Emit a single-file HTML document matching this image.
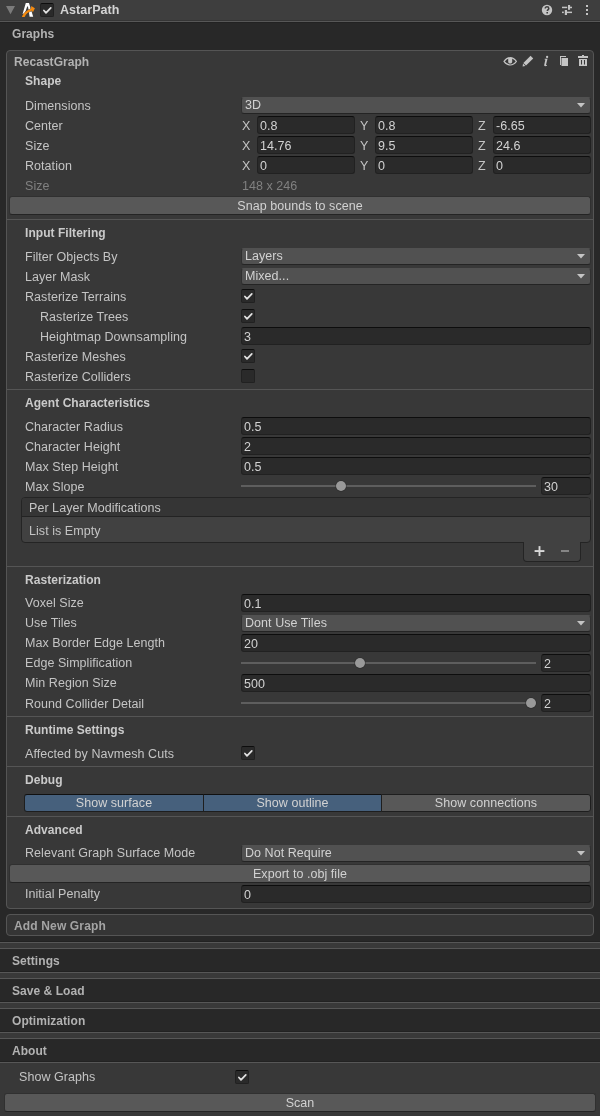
<!DOCTYPE html>
<html><head><meta charset="utf-8"><style>
html,body{margin:0;padding:0;}
body{width:600px;height:1116px;overflow:hidden;position:relative;background:#383838;font-family:"Liberation Sans",sans-serif;}
div,svg{position:absolute;box-sizing:border-box;}
.abs{position:absolute;}
.t{will-change:transform;font-size:12.5px;line-height:18px;white-space:nowrap;color:#c4c4c4;letter-spacing:0.05px;}
.t.b{font-weight:bold;letter-spacing:0.05px;font-size:12px;}
.hdr{background:#3e3e3e;}
.hdrt{color:#d4d4d4;}
.dark{background:#282828;}
.sec{color:#b2b2b2;}
.gtitle{color:#b2b2b2;}
.h2{color:#cacaca;}
.addt{color:#a4a4a4;letter-spacing:0.15px !important;}
.lbl{color:#c4c4c4;}
.val{color:#d2d2d2;}
.dis{color:#808080;}
.box{background:#383838;border:1px solid #555;border-radius:4px;}
.box2{background:#353535;border:1px solid #555;border-radius:4px;}
.sep{background:#555;}
.fld{background:#2a2a2a;border:1px solid #212121;border-top-color:#0d0d0d;border-radius:3px;}
.pop{background:#515151;border:1px solid #303030;border-top-color:#515151;border-bottom-color:#242424;border-radius:3px;}
.btn{background:#585858;border:1px solid #303030;border-top-color:#303030;border-bottom-color:#242424;border-radius:3px;}
.chk{background:#2a2a2a;border:1px solid #212121;border-top-color:#0d0d0d;border-radius:2px;}
.trk{background:#5e5e5e;}
.thumb{width:10.5px;height:10.5px;border-radius:50%;background:#999;box-shadow:0 0 0 0.6px rgba(30,30,30,0.6);}
.tb{background:#585858;border:1px solid #1e1e1e;}
.tb.sel{background:#46607c;border-color:#101010 #1e1e1e #1e1e1e #1e1e1e;}
.plbox{background:#414141;border:1px solid #242424;border-radius:4px;}
.plfoot{background:#414141;border:1px solid #242424;border-top:none;border-radius:0 0 4px 4px;}
</style></head><body>
<div class="hdr" style="left:0px;top:0px;width:600px;height:20px;"></div>
<div class="abs" style="left:0px;top:20px;width:600px;height:1px;background:#353535"></div>
<div class="abs" style="left:0px;top:21px;width:600px;height:1px;background:#575757"></div>
<div class="abs" style="left:0px;top:22px;width:600px;height:1px;background:#222"></div>
<svg class="abs" style="left:6px;top:6px" width="9" height="9" viewBox="0 0 9 9"><path d="M0 0H9L4.5 8.3Z" fill="#7b7b7b"/></svg>
<svg class="abs" style="left:20px;top:1px" width="18" height="18" viewBox="20 1 18 18"><path d="M25.8 3.1L29 3.1L33.2 16.8L29.6 16.8L28 6.6L27.2 6.6L24.6 14L22.6 14Z" fill="#fff"/><path d="M21.8 16.9C23 13.5 26 10.5 31 8.8L31.3 6L34.9 8.2L32.8 12.5L32 10.6C28.5 12 26 14 24.6 16.9Z" fill="#f48a0f" stroke="#3e3e3e" stroke-width="0.7" paint-order="stroke"/></svg>
<div class="chk" style="left:40px;top:3px;width:14px;height:14px;"></div>
<svg class="abs" style="left:40px;top:3px" width="14" height="14" viewBox="0 0 14 14"><path d="M3.9 7.5L6 9.9L10.8 4.8" fill="none" stroke="#e2e2e2" stroke-width="1.7" stroke-linecap="round" stroke-linejoin="round"/></svg>
<div class="t b hdrt" style="left:60px;top:0.74px;font-size:12.5px">AstarPath</div>
<svg class="abs" style="left:541px;top:4px" width="12" height="12" viewBox="0 0 12 12"><circle cx="6" cy="6" r="5.2" fill="#c4c4c4"/><path d="M4.2 4.6C4.2 3.4 5 2.8 6 2.8C7 2.8 7.8 3.4 7.8 4.4C7.8 5.6 6.3 5.7 6.3 7.1" fill="none" stroke="#3e3e3e" stroke-width="1.5"/><rect x="5.4" y="8" width="1.6" height="1.5" fill="#3e3e3e"/></svg>
<svg class="abs" style="left:561px;top:4px" width="12" height="12" viewBox="561 4 12 12" fill="#c4c4c4"><rect x="562" y="6.7" width="5.2" height="1.5"/><rect x="568.2" y="6.7" width="3.8" height="1.5"/><rect x="568" y="5" width="2.1" height="4.8"/><rect x="562" y="11.6" width="1.8" height="1.5"/><rect x="565.5" y="11.6" width="6.5" height="1.5"/><rect x="564.8" y="10" width="2.2" height="5"/></svg>
<svg class="abs" style="left:584px;top:4px" width="6" height="12" viewBox="0 0 6 12" fill="#c4c4c4"><rect x="2" y="1" width="2" height="2"/><rect x="2" y="5" width="2" height="2"/><rect x="2" y="9" width="2" height="2"/></svg>
<div class="dark" style="left:0px;top:23px;width:600px;height:919px;"></div>
<div class="t b sec" style="left:12px;top:25.04px;">Graphs</div>
<div class="box" style="left:6px;top:50px;width:588px;height:859px"></div>
<div class="t b gtitle" style="left:14px;top:53.24px;">RecastGraph</div>
<svg class="abs" style="left:503px;top:56px" width="15" height="11" viewBox="503 56 15 11"><path d="M504 61.4C506 58.6 508 57.6 510.2 57.6C512.4 57.6 514.4 58.6 516.4 61.4C514.4 64.2 512.4 65 510.2 65C508 65 506 64.2 504 61.4Z" fill="none" stroke="#c4c4c4" stroke-width="1.1"/><path d="M508.2 58H512.2V61.8C512.2 63 511.3 63.6 510.2 63.6C509.1 63.6 508.2 63 508.2 61.8Z" fill="#c4c4c4"/></svg>
<svg class="abs" style="left:522px;top:55px" width="12" height="12" viewBox="0 0 12 12" fill="#c4c4c4"><path d="M8.6 0.8L11.2 3.4L4 10.6L1.4 8Z"/><path d="M1 8.6L3.4 11L0.6 11.4Z"/></svg>
<svg class="abs" style="left:542px;top:55px" width="8" height="12" viewBox="542 55 8 12" fill="#c4c4c4"><circle cx="547.1" cy="57" r="1.15"/><path d="M544.7 58.8H547.5L546.1 64.5C546 65 546.3 65.2 546.9 64.9L547.1 65.6C546.1 66.3 544.6 66.5 544.3 65.8C544.1 65.4 544.2 65 544.3 64.5L545.4 59.6H544.5Z"/></svg>
<svg class="abs" style="left:559px;top:55px" width="11" height="12" viewBox="0 0 11 12" fill="#c4c4c4"><path d="M1 1H7V2H2V10H1Z"/><rect x="2.5" y="3" width="6.5" height="8"/></svg>
<svg class="abs" style="left:577px;top:54px" width="12" height="13" viewBox="0 0 12 13" fill="#c4c4c4"><rect x="5" y="1" width="2" height="1.5"/><rect x="1" y="2" width="10" height="2"/><path d="M2 5H10V12H2Z M4 6V10.5H5V6Z M7 6V10.5H8V6Z" fill-rule="evenodd"/></svg>
<div class="t b h2" style="left:25px;top:72.34px;">Shape</div>
<div class="t lbl" style="left:25px;top:96.97px;">Dimensions</div>
<div class="pop" style="left:241px;top:97px;width:350px;height:17px;"></div>
<div class="t val" style="left:244.5px;top:96.17px;">3D</div>
<svg class="arr" style="left:577px;top:103px" width="8" height="5" viewBox="0 0 8 5"><path d="M0 0H8L4 4.5Z" fill="#c4c4c4"/></svg>
<div class="t lbl" style="left:25px;top:117.17px;">Center</div>
<div class="t lbl" style="left:242px;top:117.17px;">X</div>
<div class="fld" style="left:257px;top:116px;width:98px;height:18px;"></div>
<div class="t val" style="left:260px;top:117.17px;">0.8</div>
<div class="t lbl" style="left:360px;top:117.17px;">Y</div>
<div class="fld" style="left:374.5px;top:116px;width:98.0px;height:18px;"></div>
<div class="t val" style="left:377.5px;top:117.17px;">0.8</div>
<div class="t lbl" style="left:478px;top:117.17px;">Z</div>
<div class="fld" style="left:493px;top:116px;width:98px;height:18px;"></div>
<div class="t val" style="left:496px;top:117.17px;">-6.65</div>
<div class="t lbl" style="left:25px;top:137.17px;">Size</div>
<div class="t lbl" style="left:242px;top:137.17px;">X</div>
<div class="fld" style="left:257px;top:136px;width:98px;height:18px;"></div>
<div class="t val" style="left:260px;top:137.17px;">14.76</div>
<div class="t lbl" style="left:360px;top:137.17px;">Y</div>
<div class="fld" style="left:374.5px;top:136px;width:98.0px;height:18px;"></div>
<div class="t val" style="left:377.5px;top:137.17px;">9.5</div>
<div class="t lbl" style="left:478px;top:137.17px;">Z</div>
<div class="fld" style="left:493px;top:136px;width:98px;height:18px;"></div>
<div class="t val" style="left:496px;top:137.17px;">24.6</div>
<div class="t lbl" style="left:25px;top:157.17px;">Rotation</div>
<div class="t lbl" style="left:242px;top:157.17px;">X</div>
<div class="fld" style="left:257px;top:156px;width:98px;height:18px;"></div>
<div class="t val" style="left:260px;top:157.17px;">0</div>
<div class="t lbl" style="left:360px;top:157.17px;">Y</div>
<div class="fld" style="left:374.5px;top:156px;width:98.0px;height:18px;"></div>
<div class="t val" style="left:377.5px;top:157.17px;">0</div>
<div class="t lbl" style="left:478px;top:157.17px;">Z</div>
<div class="fld" style="left:493px;top:156px;width:98px;height:18px;"></div>
<div class="t val" style="left:496px;top:157.17px;">0</div>
<div class="t dis" style="left:25px;top:177.17px;">Size</div>
<div class="t dis" style="left:242px;top:177.17px;">148 x 246</div>
<div class="btn" style="left:9px;top:196px;width:582px;height:19px;"></div>
<div class="t val" style="left:9px;width:582px;text-align:center;top:196.67px;">Snap bounds to scene</div>
<div class="sep" style="left:7px;top:219px;width:586px;height:1px;"></div>
<div class="t b h2" style="left:25px;top:223.94px;">Input Filtering</div>
<div class="t lbl" style="left:25px;top:247.57px;">Filter Objects By</div>
<div class="pop" style="left:241px;top:248px;width:350px;height:17px;"></div>
<div class="t val" style="left:244.5px;top:247.17px;">Layers</div>
<svg class="arr" style="left:577px;top:254px" width="8" height="5" viewBox="0 0 8 5"><path d="M0 0H8L4 4.5Z" fill="#c4c4c4"/></svg>
<div class="t lbl" style="left:25px;top:267.57px;">Layer Mask</div>
<div class="pop" style="left:241px;top:268px;width:350px;height:17px;"></div>
<div class="t val" style="left:244.5px;top:267.17px;">Mixed...</div>
<svg class="arr" style="left:577px;top:274px" width="8" height="5" viewBox="0 0 8 5"><path d="M0 0H8L4 4.5Z" fill="#c4c4c4"/></svg>
<div class="t lbl" style="left:25px;top:287.57px;">Rasterize Terrains</div>
<div class="chk" style="left:241px;top:289px;width:14px;height:14px;"></div>
<svg class="abs" style="left:241px;top:289px" width="14" height="14" viewBox="0 0 14 14"><path d="M3.9 7.5L6 9.9L10.8 4.8" fill="none" stroke="#e2e2e2" stroke-width="1.7" stroke-linecap="round" stroke-linejoin="round"/></svg>
<div class="t lbl" style="left:40px;top:307.57px;">Rasterize Trees</div>
<div class="chk" style="left:241px;top:309px;width:14px;height:14px;"></div>
<svg class="abs" style="left:241px;top:309px" width="14" height="14" viewBox="0 0 14 14"><path d="M3.9 7.5L6 9.9L10.8 4.8" fill="none" stroke="#e2e2e2" stroke-width="1.7" stroke-linecap="round" stroke-linejoin="round"/></svg>
<div class="t lbl" style="left:40px;top:327.57px;">Heightmap Downsampling</div>
<div class="fld" style="left:241px;top:327px;width:350px;height:18px;"></div>
<div class="t val" style="left:244px;top:328.17px;">3</div>
<div class="t lbl" style="left:25px;top:347.57px;">Rasterize Meshes</div>
<div class="chk" style="left:241px;top:349px;width:14px;height:14px;"></div>
<svg class="abs" style="left:241px;top:349px" width="14" height="14" viewBox="0 0 14 14"><path d="M3.9 7.5L6 9.9L10.8 4.8" fill="none" stroke="#e2e2e2" stroke-width="1.7" stroke-linecap="round" stroke-linejoin="round"/></svg>
<div class="t lbl" style="left:25px;top:367.57px;">Rasterize Colliders</div>
<div class="chk" style="left:241px;top:369px;width:14px;height:14px;"></div>
<div class="sep" style="left:7px;top:389px;width:586px;height:1px;"></div>
<div class="t b h2" style="left:25px;top:393.84px;">Agent Characteristics</div>
<div class="t lbl" style="left:25px;top:417.67px;">Character Radius</div>
<div class="fld" style="left:241px;top:417px;width:350px;height:18px;"></div>
<div class="t val" style="left:244px;top:418.17px;">0.5</div>
<div class="t lbl" style="left:25px;top:437.67px;">Character Height</div>
<div class="fld" style="left:241px;top:437px;width:350px;height:18px;"></div>
<div class="t val" style="left:244px;top:438.17px;">2</div>
<div class="t lbl" style="left:25px;top:457.67px;">Max Step Height</div>
<div class="fld" style="left:241px;top:457px;width:350px;height:18px;"></div>
<div class="t val" style="left:244px;top:458.17px;">0.5</div>
<div class="t lbl" style="left:25px;top:477.67px;">Max Slope</div>
<div class="trk" style="left:241px;top:485px;width:295px;height:2px;"></div>
<div class="thumb" style="left:335.75px;top:480.75px"></div>
<div class="fld" style="left:541px;top:477px;width:50px;height:18px;"></div>
<div class="t val" style="left:544px;top:478.17px;">30</div>
<div class="plfoot" style="left:523px;top:541px;width:58px;height:21px"></div>
<div class="plbox" style="left:21px;top:497px;width:570px;height:46px"><div style="left:0;top:0;width:568px;height:19px;background:#353535;border-bottom:1px solid #232323;border-radius:3px 3px 0 0"></div></div>
<div style="left:524px;top:541px;width:56px;height:2px;background:#414141"></div>
<div class="t lbl" style="left:29.2px;top:498.67px;">Per Layer Modifications</div>
<div class="t lbl" style="left:29.2px;top:521.77px;">List is Empty</div>
<svg class="abs" style="left:534px;top:546px" width="11" height="11" viewBox="0 0 11 11" fill="#d8d8d8"><rect x="0.6" y="4.1" width="9.8" height="1.9"/><rect x="4.55" y="0.1" width="1.9" height="9.9"/></svg>
<div class="abs" style="left:560.5px;top:550.2px;width:8px;height:1.7px;background:#858585"></div>
<div class="sep" style="left:7px;top:566px;width:586px;height:1px;"></div>
<div class="t b h2" style="left:25px;top:570.64px;">Rasterization</div>
<div class="t lbl" style="left:25px;top:594.17px;">Voxel Size</div>
<div class="fld" style="left:241px;top:594px;width:350px;height:18px;"></div>
<div class="t val" style="left:244px;top:595.17px;">0.1</div>
<div class="t lbl" style="left:25px;top:614.17px;">Use Tiles</div>
<div class="pop" style="left:241px;top:615px;width:350px;height:17px;"></div>
<div class="t val" style="left:244.5px;top:614.17px;">Dont Use Tiles</div>
<svg class="arr" style="left:577px;top:621px" width="8" height="5" viewBox="0 0 8 5"><path d="M0 0H8L4 4.5Z" fill="#c4c4c4"/></svg>
<div class="t lbl" style="left:25px;top:634.17px;">Max Border Edge Length</div>
<div class="fld" style="left:241px;top:634px;width:350px;height:18px;"></div>
<div class="t val" style="left:244px;top:635.17px;">20</div>
<div class="t lbl" style="left:25px;top:654.17px;">Edge Simplification</div>
<div class="trk" style="left:241px;top:662px;width:295px;height:2px;"></div>
<div class="thumb" style="left:354.75px;top:657.75px"></div>
<div class="fld" style="left:541px;top:654px;width:50px;height:18px;"></div>
<div class="t val" style="left:544px;top:655.17px;">2</div>
<div class="t lbl" style="left:25px;top:674.17px;">Min Region Size</div>
<div class="fld" style="left:241px;top:674px;width:350px;height:18px;"></div>
<div class="t val" style="left:244px;top:675.17px;">500</div>
<div class="t lbl" style="left:25px;top:694.67px;">Round Collider Detail</div>
<div class="trk" style="left:241px;top:702px;width:295px;height:2px;"></div>
<div class="thumb" style="left:525.75px;top:697.75px"></div>
<div class="fld" style="left:541px;top:694px;width:50px;height:18px;"></div>
<div class="t val" style="left:544px;top:695.17px;">2</div>
<div class="sep" style="left:7px;top:716px;width:586px;height:1px;"></div>
<div class="t b h2" style="left:25px;top:720.64px;">Runtime Settings</div>
<div class="t lbl" style="left:25px;top:744.67px;">Affected by Navmesh Cuts</div>
<div class="chk" style="left:241px;top:746px;width:14px;height:14px;"></div>
<svg class="abs" style="left:241px;top:746px" width="14" height="14" viewBox="0 0 14 14"><path d="M3.9 7.5L6 9.9L10.8 4.8" fill="none" stroke="#e2e2e2" stroke-width="1.7" stroke-linecap="round" stroke-linejoin="round"/></svg>
<div class="sep" style="left:7px;top:766px;width:586px;height:1px;"></div>
<div class="t b h2" style="left:25px;top:770.64px;">Debug</div>
<div class="tb sel" style="left:24px;top:794px;width:180px;height:18px;border-radius:3px 0 0 3px"></div>
<div class="tb sel" style="left:203px;top:794px;width:179px;height:18px;border-radius:0"></div>
<div class="tb" style="left:381px;top:794px;width:210px;height:18px;border-radius:0 3px 3px 0"></div>
<div class="t val" style="left:24px;width:180px;text-align:center;top:794.17px;">Show surface</div>
<div class="t val" style="left:203px;width:179px;text-align:center;top:794.17px;">Show outline</div>
<div class="t val" style="left:381px;width:210px;text-align:center;top:794.17px;">Show connections</div>
<div class="sep" style="left:7px;top:816px;width:586px;height:1px;"></div>
<div class="t b h2" style="left:25px;top:820.64px;">Advanced</div>
<div class="t lbl" style="left:25px;top:844.47px;">Relevant Graph Surface Mode</div>
<div class="pop" style="left:241px;top:845px;width:350px;height:17px;"></div>
<div class="t val" style="left:244.5px;top:844.17px;">Do Not Require</div>
<svg class="arr" style="left:577px;top:851px" width="8" height="5" viewBox="0 0 8 5"><path d="M0 0H8L4 4.5Z" fill="#c4c4c4"/></svg>
<div class="btn" style="left:9px;top:864px;width:582px;height:19px;"></div>
<div class="t val" style="left:9px;width:582px;text-align:center;top:864.67px;">Export to .obj file</div>
<div class="t lbl" style="left:25px;top:885.47px;">Initial Penalty</div>
<div class="fld" style="left:241px;top:885px;width:350px;height:18px;"></div>
<div class="t val" style="left:244px;top:886.17px;">0</div>
<div class="box2" style="left:6px;top:914px;width:588px;height:22px"></div>
<div class="t b addt" style="left:14.4px;top:916.74px;">Add New Graph</div>
<div class="abs" style="left:0px;top:941px;width:600px;height:1px;background:#222"></div>
<div class="abs" style="left:0px;top:942px;width:600px;height:1px;background:#575757"></div>
<div class="abs" style="left:0px;top:943px;width:600px;height:5px;background:#393939"></div>
<div class="abs" style="left:0px;top:948px;width:600px;height:1px;background:#575757"></div>
<div class="dark" style="left:0px;top:949px;width:600px;height:22px;"></div>
<div class="t b sec" style="left:12px;top:951.74px;">Settings</div>
<div class="abs" style="left:0px;top:971px;width:600px;height:1px;background:#222"></div>
<div class="abs" style="left:0px;top:972px;width:600px;height:1px;background:#575757"></div>
<div class="abs" style="left:0px;top:973px;width:600px;height:5px;background:#393939"></div>
<div class="abs" style="left:0px;top:978px;width:600px;height:1px;background:#575757"></div>
<div class="dark" style="left:0px;top:979px;width:600px;height:22px;"></div>
<div class="t b sec" style="left:12px;top:981.74px;">Save &amp; Load</div>
<div class="abs" style="left:0px;top:1001px;width:600px;height:1px;background:#222"></div>
<div class="abs" style="left:0px;top:1002px;width:600px;height:1px;background:#575757"></div>
<div class="abs" style="left:0px;top:1003px;width:600px;height:5px;background:#393939"></div>
<div class="abs" style="left:0px;top:1008px;width:600px;height:1px;background:#575757"></div>
<div class="dark" style="left:0px;top:1009px;width:600px;height:22px;"></div>
<div class="t b sec" style="left:12px;top:1011.74px;">Optimization</div>
<div class="abs" style="left:0px;top:1031px;width:600px;height:1px;background:#222"></div>
<div class="abs" style="left:0px;top:1032px;width:600px;height:1px;background:#575757"></div>
<div class="abs" style="left:0px;top:1033px;width:600px;height:5px;background:#393939"></div>
<div class="abs" style="left:0px;top:1038px;width:600px;height:1px;background:#575757"></div>
<div class="dark" style="left:0px;top:1039px;width:600px;height:22px;"></div>
<div class="t b sec" style="left:12px;top:1041.74px;">About</div>
<div class="abs" style="left:0px;top:1061px;width:600px;height:1px;background:#222"></div>
<div class="abs" style="left:0px;top:1062px;width:600px;height:1px;background:#575757"></div>
<div class="t lbl" style="left:19.3px;top:1068.47px;">Show Graphs</div>
<div class="chk" style="left:235px;top:1070px;width:14px;height:14px;"></div>
<svg class="abs" style="left:235px;top:1070px" width="14" height="14" viewBox="0 0 14 14"><path d="M3.9 7.5L6 9.9L10.8 4.8" fill="none" stroke="#e2e2e2" stroke-width="1.7" stroke-linecap="round" stroke-linejoin="round"/></svg>
<div class="btn" style="left:4px;top:1093px;width:592px;height:19px;"></div>
<div class="t val" style="left:4px;width:592px;text-align:center;top:1093.67px;">Scan</div>
</body></html>
